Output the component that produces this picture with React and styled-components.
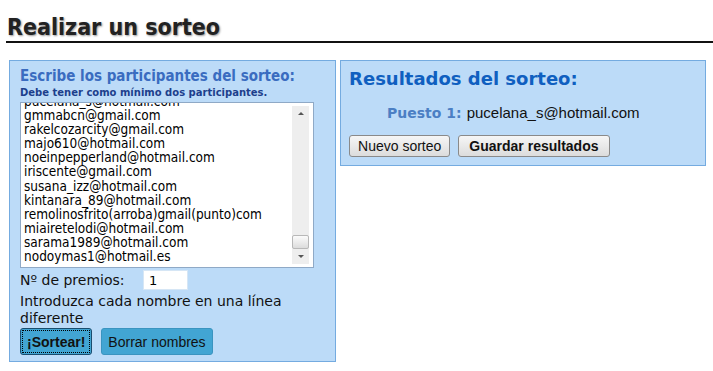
import React from "react";
import styled, { createGlobalStyle } from "styled-components";

const GlobalStyle = createGlobalStyle`
    html, body {
        margin: 0;
        padding: 0;
        background: #ffffff;
        font-family: "DejaVu Sans", Verdana, sans-serif;
    }
`;

const Page = styled.div`
    width: 713px;
    height: 371px;
    padding: 8px 7px 0 6px;
    box-sizing: border-box;
    overflow: hidden;
`;

const Title = styled.h1`
    margin: 0 -7px 0 0;
    padding: 5px 0 0 1px;
    font-family: "DejaVu Sans Condensed", "DejaVu Sans", sans-serif;
    font-size: 23px;
    font-weight: bold;
    color: #222;
    text-shadow: 1px 1px 2px #999;
    border-bottom: 2px solid #111;
    line-height: 28px;
`;

const Columns = styled.div`
    display: flex;
    align-items: flex-start;
    gap: 4px;
    margin-top: 17px;
    padding-left: 3px;
`;

const Panel = styled.div`
    background: #bcdbf8;
    border: 1px solid #74abe0;
    box-sizing: border-box;
    width: ${p => p.$width}px;
    height: ${p => p.$height}px;
    padding: ${p => p.$pad};
`;

const PanelTitle = styled.h2`
    margin: 0;
    font-family: ${p => p.$condensed ? '"DejaVu Sans Condensed", ' : ""}"DejaVu Sans", sans-serif;
    font-weight: bold;
    font-size: ${p => p.$size}px;
    color: ${p => p.$color};
    line-height: 1.2;
    white-space: nowrap;
`;

const Hint = styled.div`
    font-size: 10px;
    font-weight: bold;
    color: #1d3f8c;
    margin-top: 2px;
    white-space: nowrap;
`;

const ListBox = styled.div`
    margin-top: 4px;
    width: 294px;
    height: 166px;
    box-sizing: border-box;
    background: #fff;
    border: 1px solid #8fa9c6;
    overflow: hidden;
    display: flex;
`;

const ListLines = styled.div`
    flex: 1;
    padding: 0 0 0 3px;
    margin-top: -9px;
    font-family: "DejaVu Sans Condensed", "DejaVu Sans", sans-serif;
    font-size: 13.5px;
    line-height: 14.1px;
    color: #000;
    white-space: pre;
`;

const ScrollBar = styled.div`
    width: 17px;
    margin: 3px 4px 3px 0;
    background: #eeeeee;
    display: flex;
    flex-direction: column;
    justify-content: space-between;
    align-items: center;
`;

const Arrow = styled.div`
    width: 0;
    height: 0;
    border-left: 3px solid transparent;
    border-right: 3px solid transparent;
    ${p => p.$down ? "border-top: 3px solid #555;" : "border-bottom: 3px solid #555;"}
    margin: 6px 0;
`;

const Thumb = styled.div`
    width: 15px;
    height: 12px;
    margin-top: auto;
    border: 1px solid #b8b8b8;
    border-radius: 2px;
    background: linear-gradient(#fbfbfb, #dcdcdc);
`;

const Row = styled.div`
    display: flex;
    align-items: center;
    margin-top: ${p => p.$mt || 0}px;
    gap: ${p => p.$gap || 0}px;
`;

const Label = styled.span`
    font-size: 14px;
    color: #111;
    width: 123px;
`;

const NumInput = styled.div`
    width: 45px;
    height: 20px;
    box-sizing: border-box;
    background: #fff;
    border: 1px solid #d6e6f5;
    font-size: 13px;
    padding: 2px 0 0 5px;
`;

const Note = styled.div`
    font-size: 14px;
    line-height: 17px;
    color: #111;
    margin-top: 3px;
    width: 290px;
`;

const BlueButton = styled.button`
    font-family: "Liberation Sans", Arial, sans-serif;
    font-size: 14px;
    font-weight: ${p => p.$bold ? "bold" : "normal"};
    color: #111;
    background: #42a5d3;
    border: 1px solid ${p => p.$focus ? "#1a4d6e" : "#3a94c0"};
    outline: ${p => p.$focus ? "1px dotted #000" : "none"};
    outline-offset: -3px;
    border-radius: 3px;
    height: 27px;
    padding: 0 6px;
`;

const GreyButton = styled.button`
    font-family: "Liberation Sans", Arial, sans-serif;
    font-size: 14px;
    font-weight: ${p => p.$bold ? "bold" : "normal"};
    color: #111;
    background: linear-gradient(#f6f6f6, #dcdcdc);
    border: 1px solid #8a8a8a;
    border-radius: 3px;
    height: 22px;
    padding: 0 ${p => p.$bold ? 10 : 8}px;
`;

const Result = styled.div`
    margin: 14px 0 0 38px;
    font-family: "Liberation Sans", Arial, sans-serif;
    font-size: 15px;
    color: #111;
`;

const Place = styled.span`
    font-family: "DejaVu Sans", Verdana, sans-serif;
    font-weight: bold;
    font-size: 14px;
    color: #4b7fc4;
    margin-right: 5px;
`;

const participants = [
    "pucelana_s@hotmail.com",
    "gmmabcn@gmail.com",
    "rakelcozarcity@gmail.com",
    "majo610@hotmail.com",
    "noeinpepperland@hotmail.com",
    "iriscente@gmail.com",
    "susana_izz@hotmail.com",
    "kintanara_89@hotmail.com",
    "remolinosfrito(arroba)gmail(punto)com",
    "miairetelodi@hotmail.com",
    "sarama1989@hotmail.com",
    "nodoymas1@hotmail.es",
];

export default function App() {
    return (
        <Page>
            <GlobalStyle />
            <Title>Realizar un sorteo</Title>
            <Columns>
                <Panel $width={328} $height={302} $pad="6px 10px 0 10px">
                    <PanelTitle $condensed $size={15} $color="#3a6cc0">Escribe los participantes del sorteo:</PanelTitle>
                    <Hint>Debe tener como mínimo dos participantes.</Hint>
                    <ListBox>
                        <ListLines>{participants.join("\n")}</ListLines>
                        <ScrollBar>
                            <Arrow />
                            <Thumb />
                            <Arrow $down />
                        </ScrollBar>
                    </ListBox>
                    <Row $mt={2}>
                        <Label>Nº de premios:</Label>
                        <NumInput>1</NumInput>
                    </Row>
                    <Note>Introduzca cada nombre en una línea diferente</Note>
                    <Row $mt={1} $gap={9}>
                        <BlueButton $bold $focus>¡Sortear!</BlueButton>
                        <BlueButton>Borrar nombres</BlueButton>
                    </Row>
                </Panel>
                <Panel $width={367} $height={106} $pad="7px 8px 0 8px">
                    <PanelTitle $size={18} $color="#0f5fc0">Resultados del sorteo:</PanelTitle>
                    <Result>
                        <Place>Puesto 1:</Place>pucelana_s@hotmail.com
                    </Result>
                    <Row $mt={14} $gap={8}>
                        <GreyButton>Nuevo sorteo</GreyButton>
                        <GreyButton $bold>Guardar resultados</GreyButton>
                    </Row>
                </Panel>
            </Columns>
        </Page>
    );
}
